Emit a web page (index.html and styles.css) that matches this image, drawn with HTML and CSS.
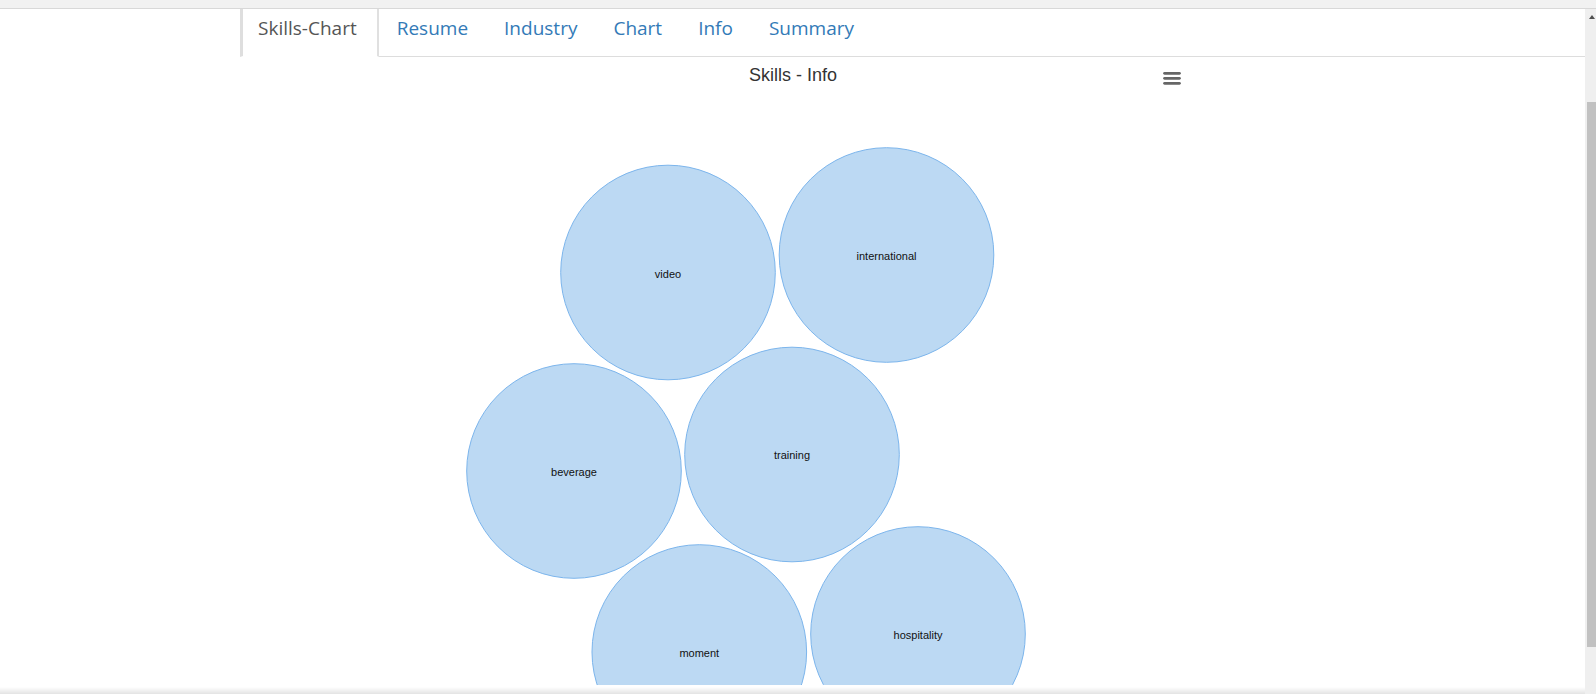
FILE: index.html
```html
<!DOCTYPE html>
<html>
<head>
<meta charset="utf-8">
<title>Skills</title>
<link rel="stylesheet" href="styles.css">
</head>
<body>
<div class="topstrip"></div>
<div class="window">
  <div class="content">
    <ul class="tabs">
      <li class="tab active"><a href="#">Skills-Chart</a></li>
      <li class="tab"><a href="#">Resume</a></li>
      <li class="tab"><a href="#">Industry</a></li>
      <li class="tab"><a href="#">Chart</a></li>
      <li class="tab"><a href="#">Info</a></li>
      <li class="tab"><a href="#">Summary</a></li>
    </ul>
    <div class="chart">
      <svg class="chart-svg" width="806" height="628" viewBox="0 0 806 628">
        <text class="chart-title" x="403" y="24" text-anchor="middle">Skills - Info</text>
        <g class="menu-icon">
          <line x1="774.5" y1="16.3" x2="789.5" y2="16.3"/>
          <line x1="774.5" y1="21.3" x2="789.5" y2="21.3"/>
          <line x1="774.5" y1="26.3" x2="789.5" y2="26.3"/>
        </g>
        <g class="bubbles">
          <circle cx="278" cy="215.5" r="107.3"/>
          <circle cx="496.5" cy="198" r="107.3"/>
          <circle cx="184" cy="414" r="107.3"/>
          <circle cx="402" cy="397.5" r="107.3"/>
          <circle cx="309.3" cy="595" r="107.3"/>
          <circle cx="528" cy="577" r="107.3"/>
        </g>
        <g class="labels">
          <text x="278" y="220.5">video</text>
          <text x="496.5" y="202.5">international</text>
          <text x="184" y="418.5">beverage</text>
          <text x="402" y="402">training</text>
          <text x="309.3" y="599.5">moment</text>
          <text x="528" y="581.5">hospitality</text>
        </g>
      </svg>
    </div>
    <div class="bottom-shadow"></div>
  </div>
  <div class="scrollbar">
    <div class="scroll-arrow"></div>
    <div class="scroll-thumb"></div>
  </div>
</div>
</body>
</html>
```

FILE: styles.css
```css
html, body {
  margin: 0;
  padding: 0;
  height: 694px;
  overflow: hidden;
  background: #ffffff;
}

.topstrip {
  height: 8px;
  background: #f1f1f1;
  border-bottom: 1px solid #d8d8d8;
}

.window {
  display: flex;
  height: 685px;
}

.content {
  flex: 1;
  position: relative;
  overflow: hidden;
}

.tabs {
  list-style: none;
  margin: 0 0 0 240px;
  padding: 0;
  display: flex;
  border-bottom: 1px solid #dddddd;
  height: 47px;
}

.tab {
  margin-bottom: -1px;
}

.tab a {
  display: block;
  height: 47px;
  padding: 0 18px;
  line-height: 39px;
  font-family: "Open Sans", "Noto Sans", sans-serif;
  font-size: 19px;
  color: #337ab7;
  text-decoration: none;
  border-bottom: 1px solid transparent;
}

.tab.active a {
  color: #555555;
  background: #ffffff;
  border-left: 3px solid #dedede;
  border-right: 2px solid #e0e0e0;
  padding-left: 15px;
  padding-right: 20px;
}

.chart {
  margin-left: 390px;
  width: 806px;
  height: 628px;
}

.chart-svg {
  display: block;
}

.chart-title {
  font-family: "Liberation Sans", Arial, sans-serif;
  font-size: 18px;
  fill: #333333;
}

.menu-icon line {
  stroke: #666666;
  stroke-width: 2.7;
  stroke-linecap: round;
}

.bubbles circle {
  fill: #bcd9f3;
  stroke: #7cb5ec;
  stroke-width: 1;
}

.labels text {
  font-family: "Liberation Sans", Arial, sans-serif;
  font-size: 11px;
  fill: #111111;
  text-anchor: middle;
}

.bottom-shadow {
  position: absolute;
  left: 0;
  right: 0;
  bottom: 0;
  height: 7px;
  background: linear-gradient(to bottom, rgba(0, 0, 0, 0), rgba(0, 0, 0, 0.11));
}

.scrollbar {
  width: 11px;
  background: #efefef;
  display: flex;
  flex-direction: column;
  align-items: flex-end;
}

.scroll-arrow {
  width: 0;
  height: 0;
  margin: 6px 1px 0 0;
  border-left: 3.5px solid transparent;
  border-right: 3.5px solid transparent;
  border-bottom: 4px solid #505050;
}

.scroll-thumb {
  width: 9px;
  height: 545px;
  margin-top: 83px;
  background: #c1c1c1;
}
```
